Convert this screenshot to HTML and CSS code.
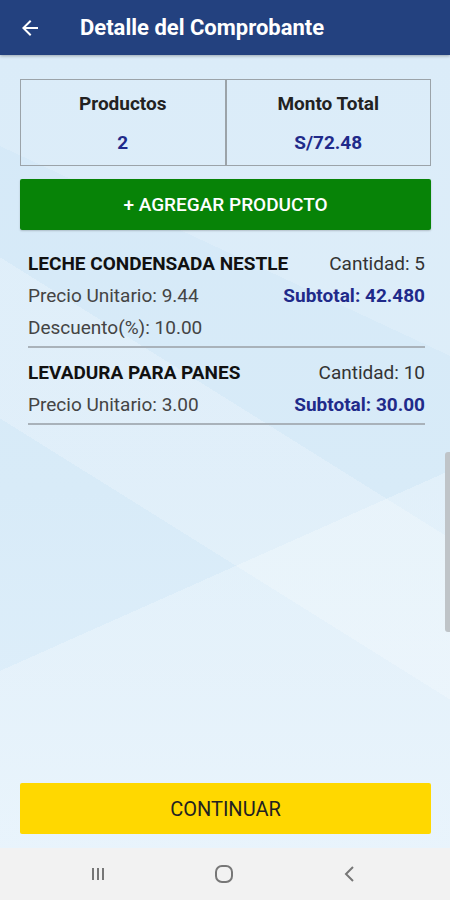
FILE: index.html
```html
<!DOCTYPE html>
<html>
<head>
<meta charset="utf-8">
<title>Detalle del Comprobante</title>
<link rel="stylesheet" href="styles.css">
</head>
<body>
  <div class="screen">
    <header class="topbar">
      <svg class="back" width="24" height="24" viewBox="0 0 24 24">
        <path d="M20 11H7.83l5.59-5.59L12 4l-8 8 8 8 1.41-1.41L7.83 13H20v-2z" fill="#fff"/>
      </svg>
      <h1>Detalle del Comprobante</h1>
    </header>

    <main class="content">
      <div class="summary">
        <div class="cell">
          <span class="label">Productos</span>
          <span class="value">2</span>
        </div>
        <div class="cell">
          <span class="label">Monto Total</span>
          <span class="value">S/72.48</span>
        </div>
      </div>

      <button class="btn add">+ AGREGAR PRODUCTO</button>

      <div class="items">
        <div class="item">
          <div class="row">
            <span class="name">LECHE CONDENSADA NESTLE</span>
            <span class="qty">Cantidad: 5</span>
          </div>
          <div class="row">
            <span class="info">Precio Unitario: 9.44</span>
            <span class="subtotal">Subtotal: 42.480</span>
          </div>
          <div class="row">
            <span class="info">Descuento(%): 10.00</span>
          </div>
        </div>
        <div class="item">
          <div class="row">
            <span class="name">LEVADURA PARA PANES</span>
            <span class="qty">Cantidad: 10</span>
          </div>
          <div class="row">
            <span class="info">Precio Unitario: 3.00</span>
            <span class="subtotal">Subtotal: 30.00</span>
          </div>
        </div>
      </div>

      <div class="scrollbar"></div>

      <button class="btn next">CONTINUAR</button>
    </main>

    <nav class="navbar">
      <svg width="24" height="24" viewBox="0 0 24 24">
        <path d="M7 6v12M12 6v12M17 6v12" stroke="#777" stroke-width="2" fill="none"/>
      </svg>
      <svg width="24" height="24" viewBox="0 0 24 24">
        <rect x="4" y="4" width="16" height="16" rx="6" stroke="#777" stroke-width="2" fill="none"/>
      </svg>
      <svg width="24" height="24" viewBox="0 0 24 24">
        <path d="M15 5l-7 7 7 7" stroke="#777" stroke-width="2" fill="none"/>
      </svg>
    </nav>
  </div>
</body>
</html>
```

FILE: styles.css
```css
html, body {
  margin: 0;
  height: 100%;
}

body {
  font-family: Roboto, "Liberation Sans", sans-serif;
}

.screen {
  width: 450px;
  height: 900px;
  display: flex;
  flex-direction: column;
}

.topbar {
  height: 55px;
  background: #23417f;
  display: flex;
  align-items: center;
  padding-left: 18px;
  box-sizing: border-box;
  box-shadow: 0 1px 3px rgba(0, 0, 0, 0.3);
  position: relative;
  z-index: 1;
}

.topbar .back {
  display: block;
}

.topbar h1 {
  margin: 0 0 0 38px;
  color: #fff;
  font-size: 22px;
  font-weight: bold;
}

.content {
  flex: 1;
  position: relative;
  display: flex;
  flex-direction: column;
  padding: 24px 19px 14px 20px;
  background:
    linear-gradient(156deg, transparent 62%, rgba(255, 255, 255, 0.25) 62%),
    linear-gradient(32deg, transparent 40%, rgba(255, 255, 255, 0.22) 40%, rgba(255, 255, 255, 0.22) 55%, transparent 55%),
    linear-gradient(205deg, rgba(255, 255, 255, 0.15) 30%, transparent 30%),
    linear-gradient(180deg, #d5e9f8 0%, #d8ebf8 55%, #e1f0fb 100%);
}

.summary {
  display: flex;
  border: 1px solid #9ba3a9;
  height: 87px;
  box-sizing: border-box;
}

.summary .cell {
  flex: 1;
  display: flex;
  flex-direction: column;
  align-items: center;
  padding-top: 12px;
}

.summary .cell + .cell {
  border-left: 2px solid #9ba3a9;
}

.summary .label {
  font-size: 19px;
  font-weight: bold;
  color: #222;
}

.summary .value {
  margin-top: 16px;
  font-size: 19px;
  font-weight: bold;
  color: #1f2a8a;
}

.btn {
  border: none;
  border-radius: 2px;
  height: 51px;
  font-family: inherit;
  font-size: 19px;
  font-weight: 500;
  width: 100%;
}

.btn.add {
  margin-top: 13px;
  background: #078307;
  color: #fff;
  box-shadow: 0 1px 2px rgba(0, 0, 0, 0.2);
}

.btn.next {
  margin-top: auto;
  background: #ffd800;
  color: #222;
  font-size: 20px;
  font-weight: normal;
}

.items {
  padding: 17px 6px 0 8px;
}

.item {
  border-bottom: 2px solid #a9b2ba;
  padding-bottom: 3px;
  margin-bottom: 8px;
}

.item .row {
  display: flex;
  justify-content: space-between;
  align-items: center;
  height: 32px;
  font-size: 19px;
}

.item .name {
  font-weight: bold;
  color: #111;
}

.item .qty {
  color: #333;
}

.item .info {
  color: #444;
}

.item .subtotal {
  font-weight: bold;
  color: #1f2a8a;
}

.scrollbar {
  position: absolute;
  right: 0;
  top: 397px;
  width: 5px;
  height: 180px;
  border-radius: 3px 0 0 3px;
  background: #bfc4c8;
}

.navbar {
  height: 52px;
  background: #f2f2f2;
  display: flex;
  align-items: center;
  justify-content: space-between;
  padding: 0 88px 0 86px;
}

.navbar svg {
  display: block;
}
```
